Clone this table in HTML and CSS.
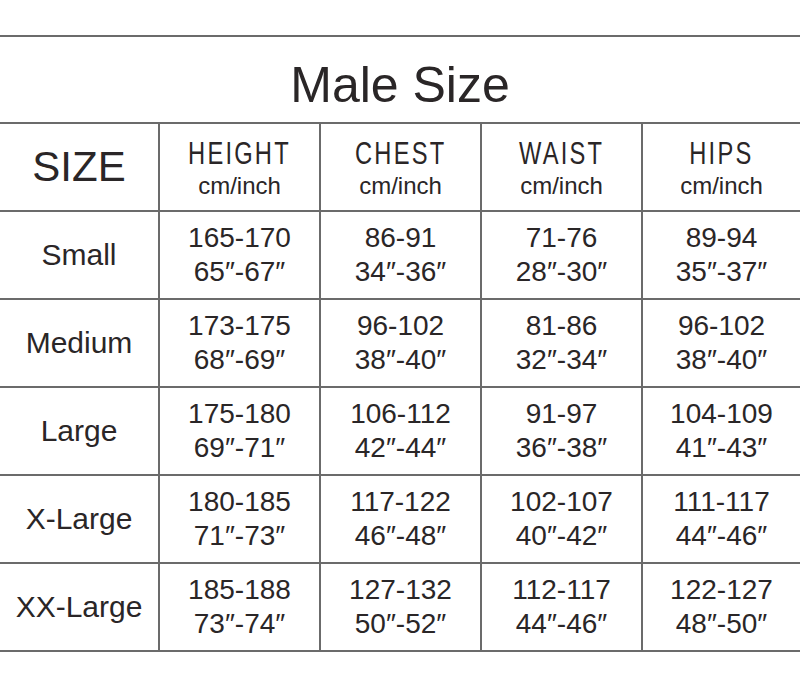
FILE: index.html
```html
<!DOCTYPE html>
<html>
<head>
<meta charset="utf-8">
<link rel="stylesheet" href="styles.css">
</head>
<body>
<table class="chart">
  <colgroup>
    <col class="c-size"><col class="c-val"><col class="c-val"><col class="c-val"><col class="c-last">
  </colgroup>
  <tr class="title-row"><td colspan="5" class="title">Male Size</td></tr>
  <tr class="head-row">
    <td class="size-head">SIZE</td>
    <td><div class="hname"><span>HEIGHT</span></div><div class="unit">cm/inch</div></td>
    <td><div class="hname"><span>CHEST</span></div><div class="unit">cm/inch</div></td>
    <td><div class="hname"><span>WAIST</span></div><div class="unit">cm/inch</div></td>
    <td><div class="hname"><span>HIPS</span></div><div class="unit">cm/inch</div></td>
  </tr>
  <tr>
    <td class="label">Small</td>
    <td class="val">165-170<br>65″-67″</td>
    <td class="val">86-91<br>34″-36″</td>
    <td class="val">71-76<br>28″-30″</td>
    <td class="val">89-94<br>35″-37″</td>
  </tr>
  <tr>
    <td class="label">Medium</td>
    <td class="val">173-175<br>68″-69″</td>
    <td class="val">96-102<br>38″-40″</td>
    <td class="val">81-86<br>32″-34″</td>
    <td class="val">96-102<br>38″-40″</td>
  </tr>
  <tr>
    <td class="label">Large</td>
    <td class="val">175-180<br>69″-71″</td>
    <td class="val">106-112<br>42″-44″</td>
    <td class="val">91-97<br>36″-38″</td>
    <td class="val">104-109<br>41″-43″</td>
  </tr>
  <tr>
    <td class="label">X-Large</td>
    <td class="val">180-185<br>71″-73″</td>
    <td class="val">117-122<br>46″-48″</td>
    <td class="val">102-107<br>40″-42″</td>
    <td class="val">111-117<br>44″-46″</td>
  </tr>
  <tr>
    <td class="label">XX-Large</td>
    <td class="val">185-188<br>73″-74″</td>
    <td class="val">127-132<br>50″-52″</td>
    <td class="val">112-117<br>44″-46″</td>
    <td class="val">122-127<br>48″-50″</td>
  </tr>
</table>
</body>
</html>
```

FILE: styles.css
```css
html, body {
  margin: 0;
  padding: 0;
  background: #ffffff;
}
body {
  padding-top: 35px;
  font-family: "Liberation Sans", Arial, sans-serif;
  color: #2a2627;
}
.chart {
  width: 800px;
  border-collapse: collapse;
  table-layout: fixed;
}
.c-size { width: 159px; }
.c-val { width: 161px; }
.c-last { width: 158px; }
.chart td {
  border: 2px solid #6b6b6b;
  height: 86px;
  padding: 0;
  text-align: center;
  vertical-align: middle;
}
.chart tr td:first-child { border-left: none; }
.chart tr td:last-child { border-right: none; }
.chart td.title {
  font-size: 50px;
  height: 74px;
  padding-top: 11px;
}
.size-head {
  font-size: 42px;
}
.hname {
  font-size: 32px;
  line-height: 36px;
  padding-top: 2px;
}
.hname span {
  display: inline-block;
  letter-spacing: 3px;
  transform: scaleX(0.74);
}
.unit {
  font-size: 24px;
  line-height: 30px;
}
.label {
  font-size: 30px;
}
.val {
  font-size: 28px;
  line-height: 34px;
}
```
